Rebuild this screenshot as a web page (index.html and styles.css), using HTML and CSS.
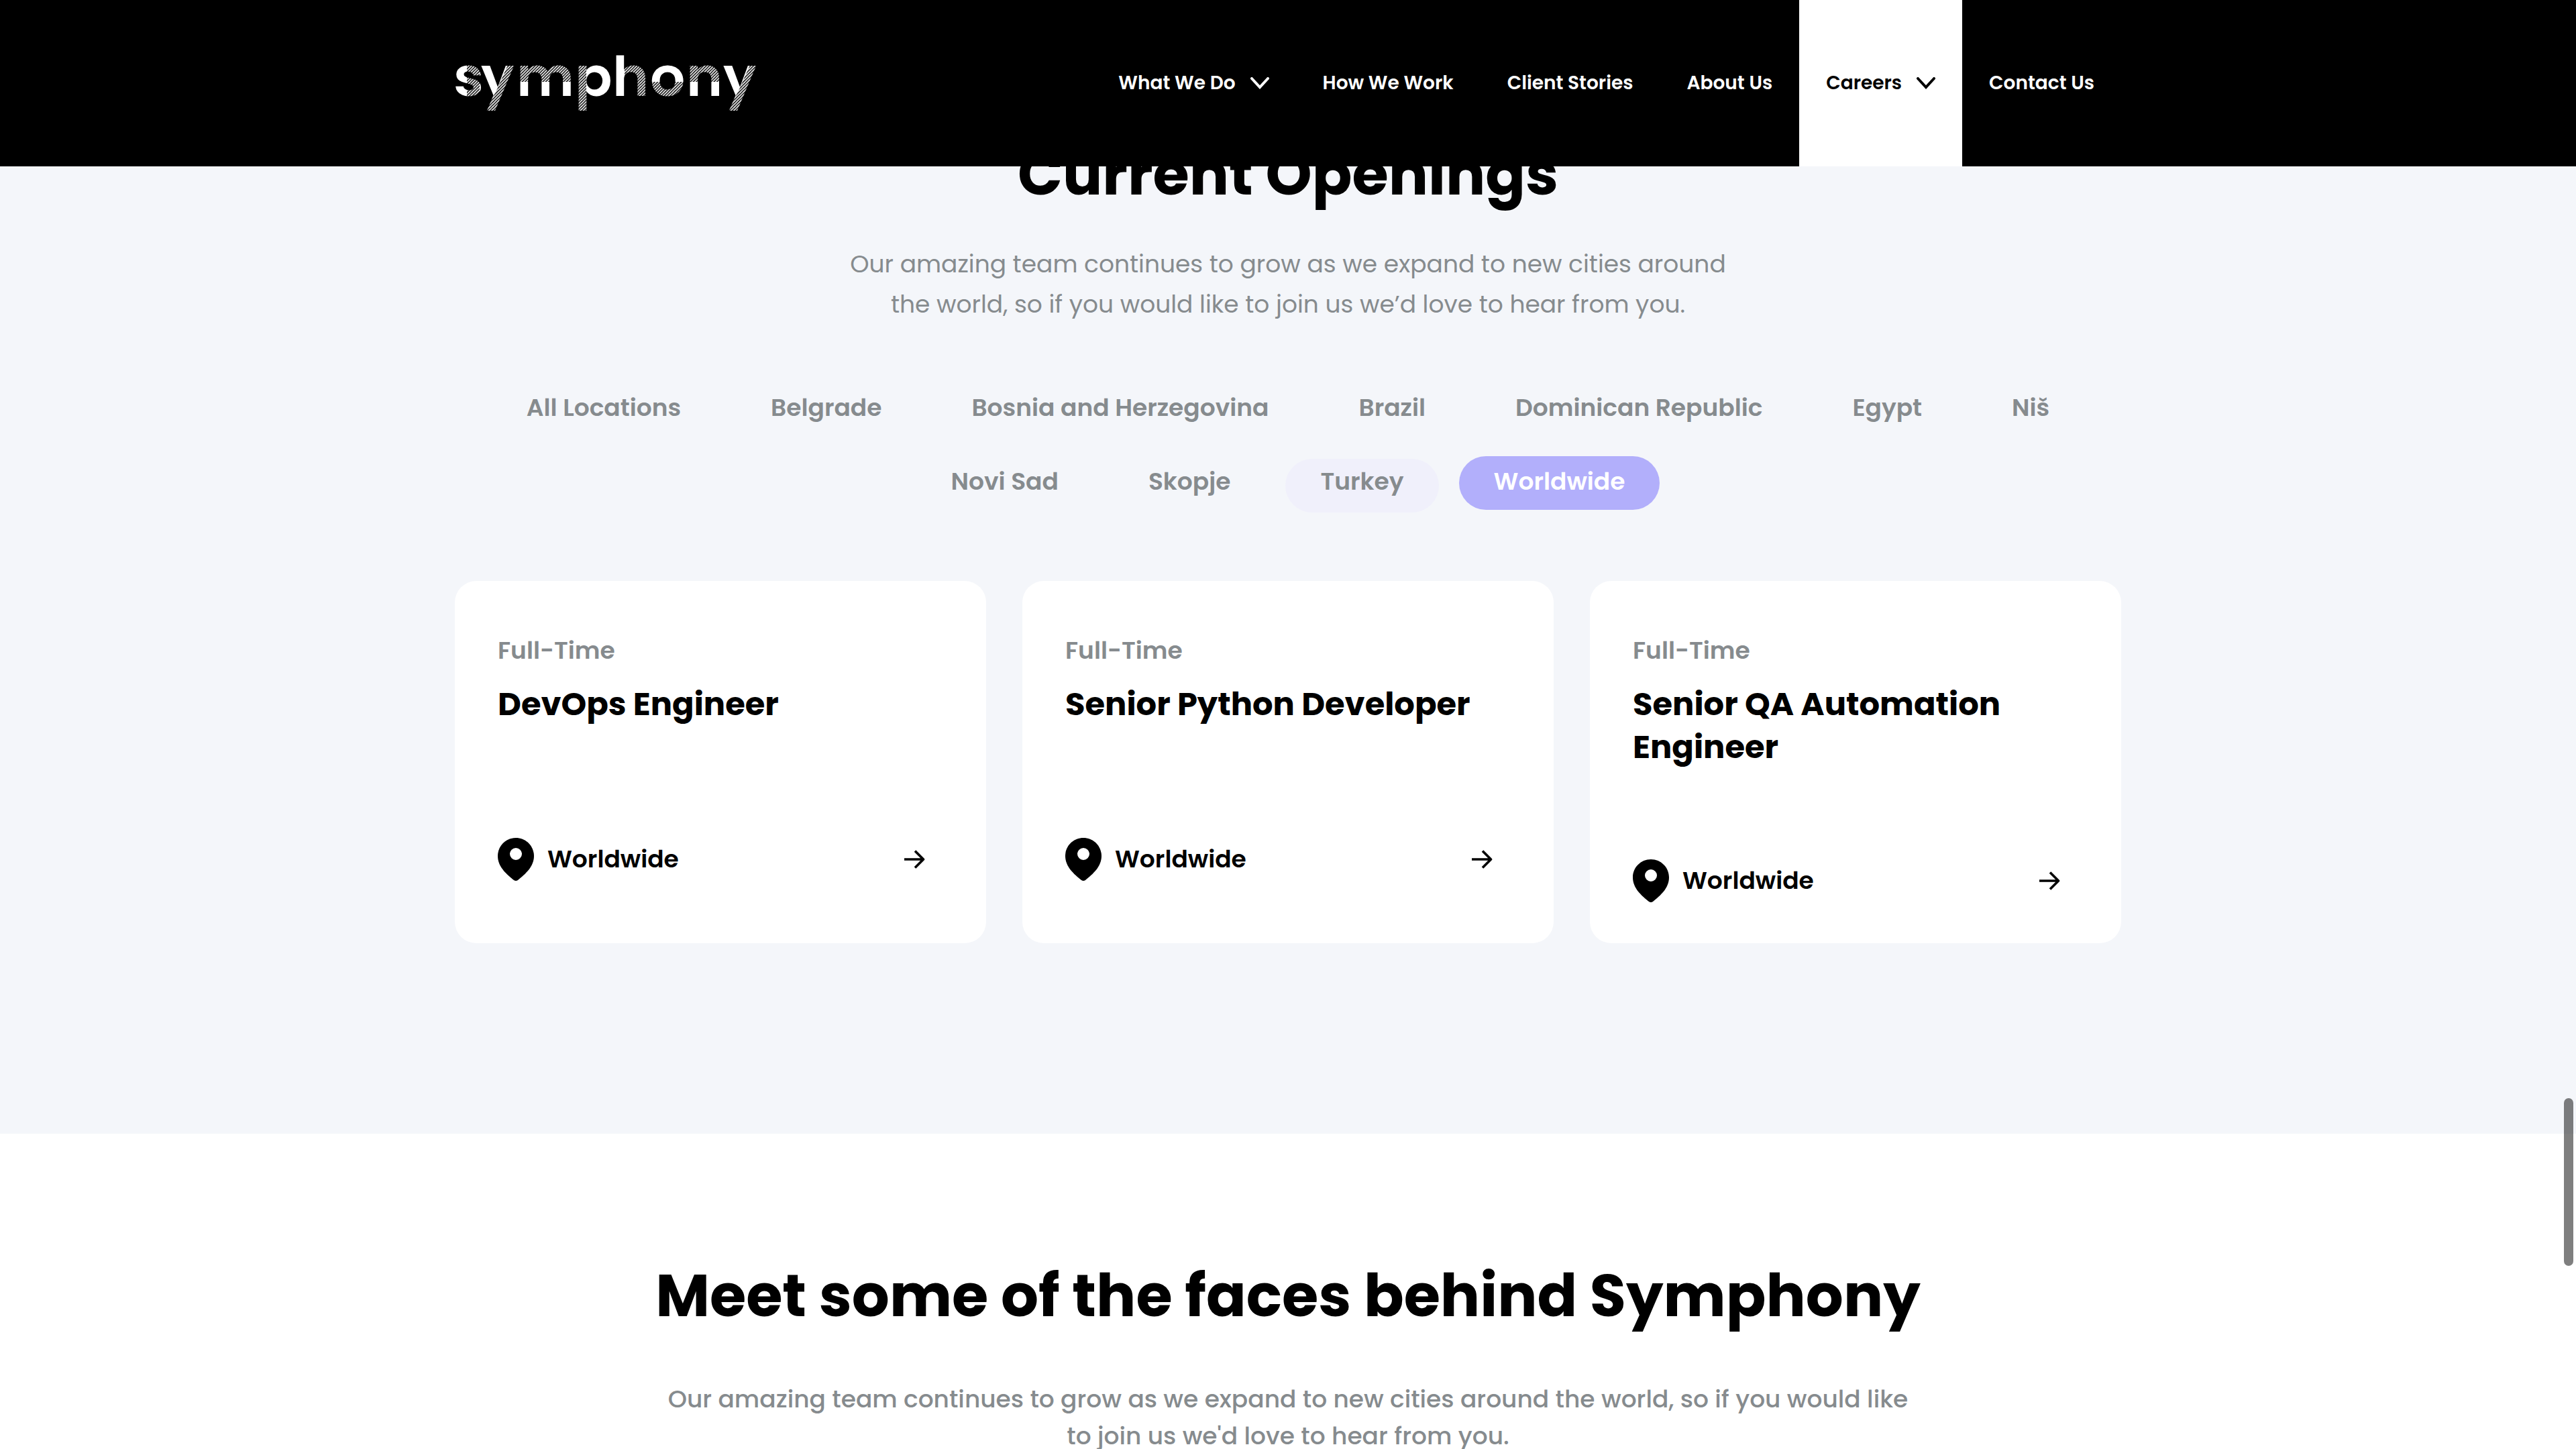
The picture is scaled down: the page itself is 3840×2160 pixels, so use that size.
FILE: index.html
```
<!DOCTYPE html>
<html lang="en">
<head>
<meta charset="utf-8">
<meta name="viewport" content="width=device-width, initial-scale=1">
<title>Careers | Symphony</title>
<link rel="stylesheet" href="styles.css">
</head>
<body>
<svg class="sprite" aria-hidden="true">
  <symbol id="chevron" viewBox="0 0 28 18"><path d="M2 2 L14 15 L26 2" fill="none" stroke="currentColor" stroke-width="4" stroke-linecap="round" stroke-linejoin="miter"/></symbol>
  <symbol id="pin" viewBox="0 0 54 64"><path fill-rule="evenodd" d="M27 0 C42 0 54 12 54 27 C54 43 41 54 30 63 Q27 65 24 63 C13 54 0 43 0 27 C0 12 12 0 27 0 Z M27 15 A9 9 0 1 0 27 33 A9 9 0 1 0 27 15 Z" fill="currentColor"/></symbol>
  <symbol id="arrow" viewBox="0 0 32 32"><path d="M1 16 H29 M17 3.500 L29.500 16 L17 28.500" fill="none" stroke="currentColor" stroke-width="3.600" stroke-linejoin="round" stroke-linecap="butt"/></symbol>
</svg>

<header class="header">
  <div class="container header-row">
    <a class="logo" href="#" aria-label="Symphony">
      <svg class="logo-art" viewBox="38 20 452 110">
        <defs>
          <pattern id="stripes" width="4" height="4" patternUnits="userSpaceOnUse" patternTransform="scale(1.1)">
            <path d="M-1 1 L1 -1 M0 4 L4 0 M3 5 L5 3" stroke="#000" stroke-width="1.3"/>
          </pattern>
        </defs>
        <text class="logo-text" y="94" x="36 77 130 217 273 329 383 438">symphony</text>
        <g fill="url(#stripes)">
          <rect x="56" y="48" width="19" height="50"/>
          <path d="M117 48 H131 L97 120 H82 L101 84 Z"/>
          <rect x="134" y="48" width="79" height="25"/>
          <rect x="220" y="48" width="14" height="70"/>
          <rect x="291" y="48" width="35" height="50"/>
          <rect x="330" y="73" width="52" height="25"/>
          <rect x="386" y="48" width="51" height="25"/>
          <path d="M478 48 H492 L458 120 H443 L462 84 Z"/>
        </g>
      </svg>
    </a>
    <nav class="nav" aria-label="Main">
      <a class="nav-link" href="#">What We Do <svg class="chevron" aria-hidden="true"><use href="#chevron"/></svg></a>
      <a class="nav-link" href="#">How We Work</a>
      <a class="nav-link" href="#">Client Stories</a>
      <a class="nav-link" href="#">About Us</a>
      <a class="nav-link nav-link-active" href="#">Careers <svg class="chevron" aria-hidden="true"><use href="#chevron"/></svg></a>
      <a class="nav-link" href="#">Contact Us</a>
    </nav>
  </div>
</header>

<main>
  <section class="openings">
    <div class="container">
      <h2 class="heading">Current Openings</h2>
      <p class="lead">Our amazing team continues to grow as we expand to new cities around the world, so if you would like to join us we’d love to hear from you.</p>
      <div class="filters">
        <button class="filter" type="button">All Locations</button>
        <button class="filter" type="button">Belgrade</button>
        <button class="filter" type="button">Bosnia and Herzegovina</button>
        <button class="filter" type="button">Brazil</button>
        <button class="filter" type="button">Dominican Republic</button>
        <button class="filter" type="button">Egypt</button>
        <button class="filter" type="button">Niš</button>
        <button class="filter" type="button">Novi Sad</button>
        <button class="filter" type="button">Skopje</button>
        <button class="filter filter-hover" type="button">Turkey</button>
        <button class="filter filter-active" type="button" aria-pressed="true">Worldwide</button>
      </div>
      <div class="cards">
        <a class="card" href="#">
          <p class="card-type">Full-Time</p>
          <h3 class="card-title">DevOps Engineer</h3>
          <div class="card-foot"><svg class="pin" aria-hidden="true"><use href="#pin"/></svg><span>Worldwide</span><svg class="arrow" aria-hidden="true"><use href="#arrow"/></svg></div>
        </a>
        <a class="card" href="#">
          <p class="card-type">Full-Time</p>
          <h3 class="card-title">Senior Python Developer</h3>
          <div class="card-foot"><svg class="pin" aria-hidden="true"><use href="#pin"/></svg><span>Worldwide</span><svg class="arrow" aria-hidden="true"><use href="#arrow"/></svg></div>
        </a>
        <a class="card" href="#">
          <p class="card-type">Full-Time</p>
          <h3 class="card-title">Senior QA Automation Engineer</h3>
          <div class="card-foot"><svg class="pin" aria-hidden="true"><use href="#pin"/></svg><span>Worldwide</span><svg class="arrow" aria-hidden="true"><use href="#arrow"/></svg></div>
        </a>
      </div>
    </div>
  </section>

  <section class="faces">
    <div class="container">
      <h2 class="heading">Meet some of the faces behind Symphony</h2>
      <p class="faces-lead">Our amazing team continues to grow as we expand to new cities around the world, so if you would like to join us we'd love to hear from you.</p>
    </div>
  </section>
</main>
<div class="scroll-thumb" aria-hidden="true"></div>
</body>
</html>
```
FILE: styles.css
```
* { box-sizing: border-box; }

html { scrollbar-width: none; }

body {
  margin: 0;
  background: #fff;
  color: #000;
  font-family: Poppins, Inter, sans-serif;
  font-size: 36px;
}

a { color: inherit; text-decoration: none; }
h2, h3, p { margin: 0; }

.sprite { position: absolute; width: 0; height: 0; }

.container {
  width: 100%;
  max-width: 2484px;
  margin: 0 auto;
}

/* Header */
.header {
  position: fixed;
  top: 0;
  left: 0;
  right: 0;
  z-index: 2;
  background: #000;
  color: #fff;
}

.header-row {
  display: flex;
  justify-content: space-between;
  align-items: center;
}

.logo { display: block; }
.logo-art { display: block; width: 452px; height: 110px; overflow: visible; }
.logo-text { font-size: 82px; font-weight: 600; fill: #fff; }

.nav { display: flex; }

.nav-link {
  display: flex;
  align-items: center;
  gap: 22px;
  height: 248px;
  padding: 0 40px;
  font-size: 28px;
  font-weight: 600;
  white-space: nowrap;
}

.nav-link-active { background: #fff; color: #000; }
.chevron { width: 28px; height: 18px; }

/* Openings */
.openings {
  padding: 204px 0 284px;
  background: #f4f6fa;
}

.heading {
  font-size: 88px;
  font-weight: 700;
  line-height: 112px;
  text-align: center;
}

.lead {
  max-width: 1350px;
  margin: 48px auto 0;
  color: #868b8e;
  line-height: 60px;
  text-align: center;
}

.filters {
  display: flex;
  flex-wrap: wrap;
  justify-content: center;
  gap: 30px;
  margin-top: 86px;
}

.filter {
  position: relative;
  padding: 13px 52px 17px;
  border: 0;
  border-radius: 40px;
  background: transparent;
  color: #868b8e;
  font: inherit;
  font-weight: 600;
  line-height: 50px;
}

.filter-hover { isolation: isolate; }

.filter-hover::before {
  content: "";
  position: absolute;
  inset: 4px 0 -4px;
  z-index: -1;
  border-radius: 40px;
  background: #f0f0fb;
}

.filter-active { background: #b2affb; color: #fff; }

/* Job cards */
.cards {
  display: grid;
  grid-template-columns: repeat(3, 1fr);
  gap: 54px;
  margin-top: 106px;
}

.card {
  padding: 79px 64px 61px;
  border-radius: 32px;
  background: #fff;
}

.card-type {
  color: #868b8e;
  font-weight: 600;
  line-height: 50px;
}

.card-title {
  min-height: 96px;
  margin-top: 23px;
  font-size: 48px;
  font-weight: 700;
  line-height: 64px;
}

.card-foot {
  display: flex;
  align-items: center;
  margin-top: 135px;
  font-weight: 600;
  line-height: 50px;
}

.pin { width: 54px; height: 64px; margin-right: 20px; }
.arrow { width: 32px; height: 32px; margin: 0 27px 0 auto; }

/* Faces */
.faces { padding: 186px 0 96px; }

.faces-lead {
  max-width: 1880px;
  margin: 70px auto 0;
  color: #868b8e;
  font-weight: 500;
  line-height: 55px;
  text-align: center;
}

.scroll-thumb {
  position: fixed;
  top: 1637px;
  right: 4px;
  z-index: 3;
  width: 14px;
  height: 250px;
  border-radius: 7px;
  background: rgba(0, 0, 0, 0.5);
}
```
